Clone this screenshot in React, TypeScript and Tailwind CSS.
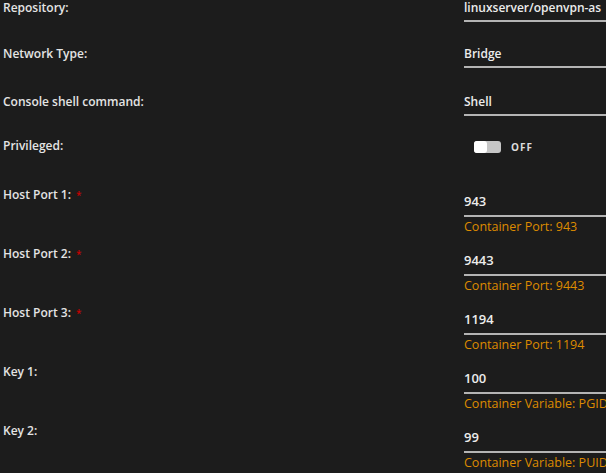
import React from "react";

type Field = {
    label: string;
    value: string;
    required?: boolean;
    help?: string;
};

const simple: { label: string; value: string; h: string }[] = [
    { label: "Repository:", value: "linuxserver/openvpn-as", h: "h-[47px] pt-[1px]" },
    { label: "Network Type:", value: "Bridge", h: "h-[48px]" },
    { label: "Console shell command:", value: "Shell", h: "h-[44px]" },
];

const fields: Field[] = [
    { label: "Host Port 1:", value: "943", required: true, help: "Container Port: 943" },
    { label: "Host Port 2:", value: "9443", required: true, help: "Container Port: 9443" },
    { label: "Host Port 3:", value: "1194", required: true, help: "Container Port: 1194" },
    { label: "Key 1:", value: "100", help: "Container Variable: PGID" },
    { label: "Key 2:", value: "99", help: "Container Variable: PUID" },
];

const Label = ({ text, required }: { text: string; required?: boolean }) => (
    <div className="w-[464px] shrink-0 pl-[3px] text-[12px] leading-[14px] font-semibold text-[#e4e4e4]">
        {text}
        {required && <span className="ml-[5px] text-[10px] align-top text-[#c40000]">*</span>}
    </div>
);

export default function App() {
    return (
        <div
            className="w-[606px] h-[473px] overflow-hidden bg-[#1c1c1c] flex flex-col"
            style={{ fontFamily: '"Open Sans", "Noto Sans", sans-serif' }}
        >
            {simple.map((s) => (
                <div key={s.label} className={`flex ${s.h} shrink-0`}>
                    <Label text={s.label} />
                    <div className="flex-1 min-w-0">
                        <div className="pb-[5px] border-b-2 border-[#b4b4b4] text-[12px] leading-[14px] font-semibold text-[#ececec] whitespace-nowrap">
                            {s.value}
                        </div>
                    </div>
                </div>
            ))}

            <div className="flex h-[49px] shrink-0">
                <Label text="Privileged:" />
                <div className="flex-1 flex items-start pt-[2px] pl-[10px] gap-[10px]">
                    <div className="w-[27px] h-[12px] rounded-[3px] bg-[#c6c6c6] flex">
                        <div className="w-[13px] h-[12px] rounded-[3px] bg-white" />
                    </div>
                    <span className="text-[10px] leading-[12px] font-bold tracking-[1px] text-[#dcdcdc]">OFF</span>
                </div>
            </div>

            {fields.map((f) => (
                <div key={f.label} className="flex h-[59px] shrink-0">
                    <Label text={f.label} required={f.required} />
                    <div className="flex-1 min-w-0 pt-[6px]">
                        <div className="pb-[7px] border-b-2 border-[#b4b4b4] text-[13px] leading-[14px] font-semibold text-[#ececec]">
                            {f.value}
                        </div>
                        <div className="mt-[3px] text-[12.5px] leading-[14px] text-[#dd8b00] whitespace-nowrap">
                            {f.help}
                        </div>
                    </div>
                </div>
            ))}
        </div>
    );
}
